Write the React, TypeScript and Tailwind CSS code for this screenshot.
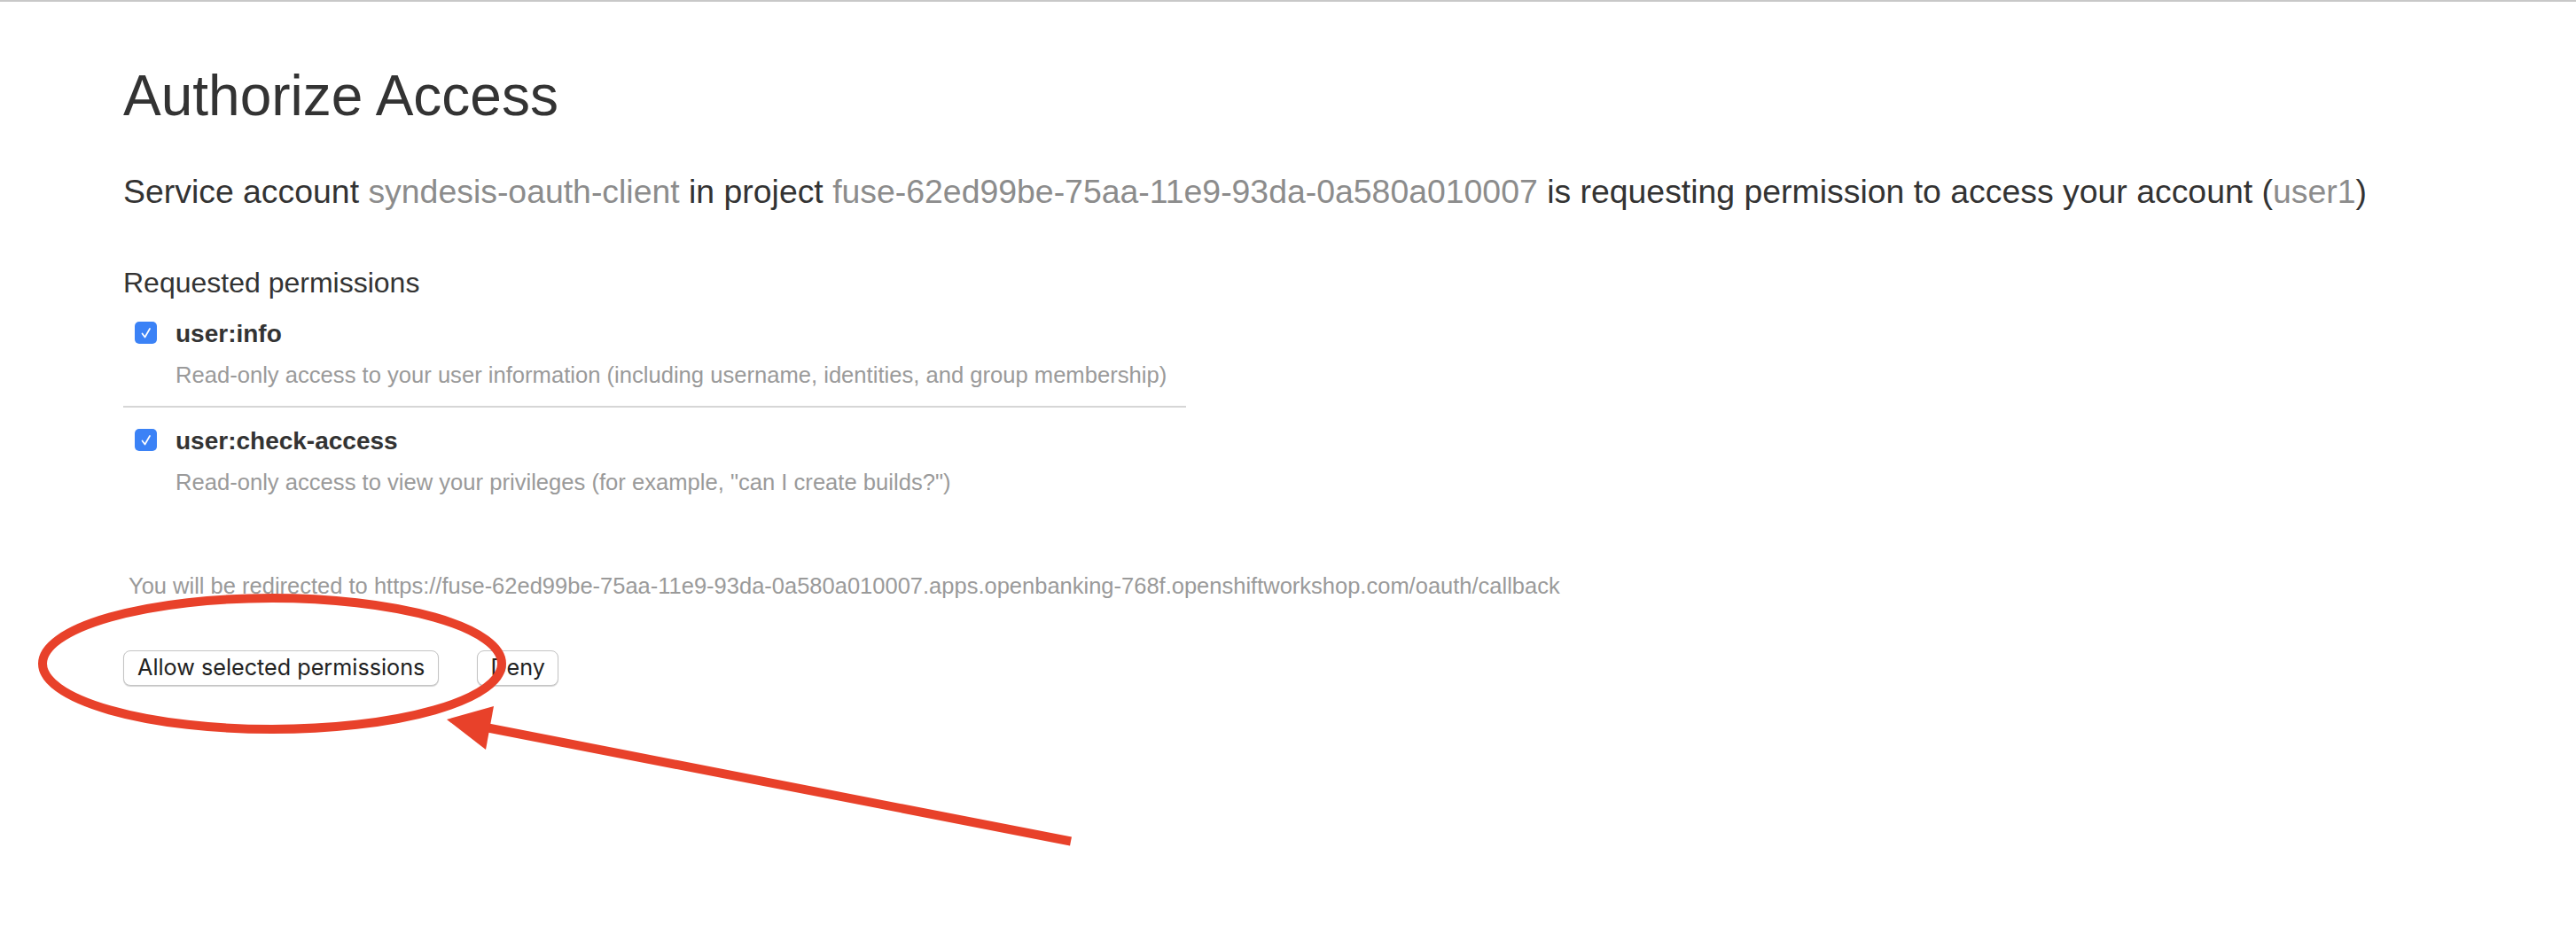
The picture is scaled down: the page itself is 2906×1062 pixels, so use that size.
import React from 'react';

const Checkbox = () => (
    <span className="mt-[3px] flex h-[25px] w-[25px] shrink-0 items-center justify-center rounded-[5px] bg-[#3b82f6]">
        <svg width="16" height="16" viewBox="0 0 16 16" fill="none">
            <path d="M3.5 8.5 L6.5 12.5 L12 3" stroke="#fff" strokeWidth="1.7" strokeLinecap="round" strokeLinejoin="round" />
        </svg>
    </span>
);

const Permission = ({ name, desc }: { name: string; desc: string }) => (
    <div className="flex items-start gap-[21px] pl-[13px]">
        <Checkbox />
        <div>
            <div className="text-[28px] font-bold leading-[34px] text-[#333]">{name}</div>
            <div className="mt-[13px] text-[25.6px] leading-[32px] text-[#9a9a9a]">{desc}</div>
        </div>
    </div>
);

const App = () => {
    return (
        <div className="relative min-h-[1062px] w-full bg-white font-['Liberation_Sans',Arial,sans-serif]">
            <div className="h-[2px] w-full bg-[#c8c8c8]" />
            <div className="pl-[139px] pt-[68px]">
                <h1 className="text-[64px] leading-[76px] text-[#333]">Authorize Access</h1>
                <p className="mt-[48px] whitespace-nowrap text-[37.4px] leading-[44px] text-[#333]">
                    Service account <span className="text-[#8c8c8c]">syndesis-oauth-client</span> in project{' '}
                    <span className="text-[#8c8c8c]">fuse-62ed99be-75aa-11e9-93da-0a580a010007</span> is requesting permission to
                    access your account (<span className="text-[#8c8c8c]">user1</span>)
                </p>
                <h3 className="mt-[62px] text-[32px] leading-[38px] text-[#333]">Requested permissions</h3>
                <div className="mt-[22px] w-[1199px]">
                    <Permission
                        name="user:info"
                        desc="Read-only access to your user information (including username, identities, and group membership)"
                    />
                    <div className="mt-[19px] h-[2px] bg-[#d6d6d6]" />
                    <div className="mt-[21px]">
                        <Permission
                            name="user:check-access"
                            desc={'Read-only access to view your privileges (for example, "can I create builds?")'}
                        />
                    </div>
                </div>
                <p className="mt-[85px] pl-[6px] text-[25.5px] leading-[32px] text-[#9a9a9a]">
                    You will be redirected to
                    https://fuse-62ed99be-75aa-11e9-93da-0a580a010007.apps.openbanking-768f.openshiftworkshop.com/oauth/callback
                </p>
                <div className="mt-[57px] flex gap-[43px]">
                    <button className="h-[40px] rounded-[8px] border border-[#c4c4c4] bg-white px-[15px] font-['Inter',sans-serif] text-[25.2px] text-[#222] shadow-[0_1px_1px_rgba(0,0,0,0.18)]">
                        Allow selected permissions
                    </button>
                    <button className="h-[40px] rounded-[8px] border border-[#c4c4c4] bg-white px-[14px] font-['Inter',sans-serif] text-[25.2px] text-[#222] shadow-[0_1px_1px_rgba(0,0,0,0.18)]">
                        Deny
                    </button>
                </div>
            </div>

            {/* red annotation */}
            <svg className="pointer-events-none absolute left-0 top-0" width="2906" height="1062">
                <ellipse cx="307" cy="749" rx="259" ry="74" fill="none" stroke="#e8412a" strokeWidth="10" />
                <line x1="1208" y1="949.5" x2="548" y2="821" stroke="#e8412a" strokeWidth="10" />
                <polygon points="504,812 557,797 548,846" fill="#e8412a" />
            </svg>
        </div>
    );
};

export default App;
